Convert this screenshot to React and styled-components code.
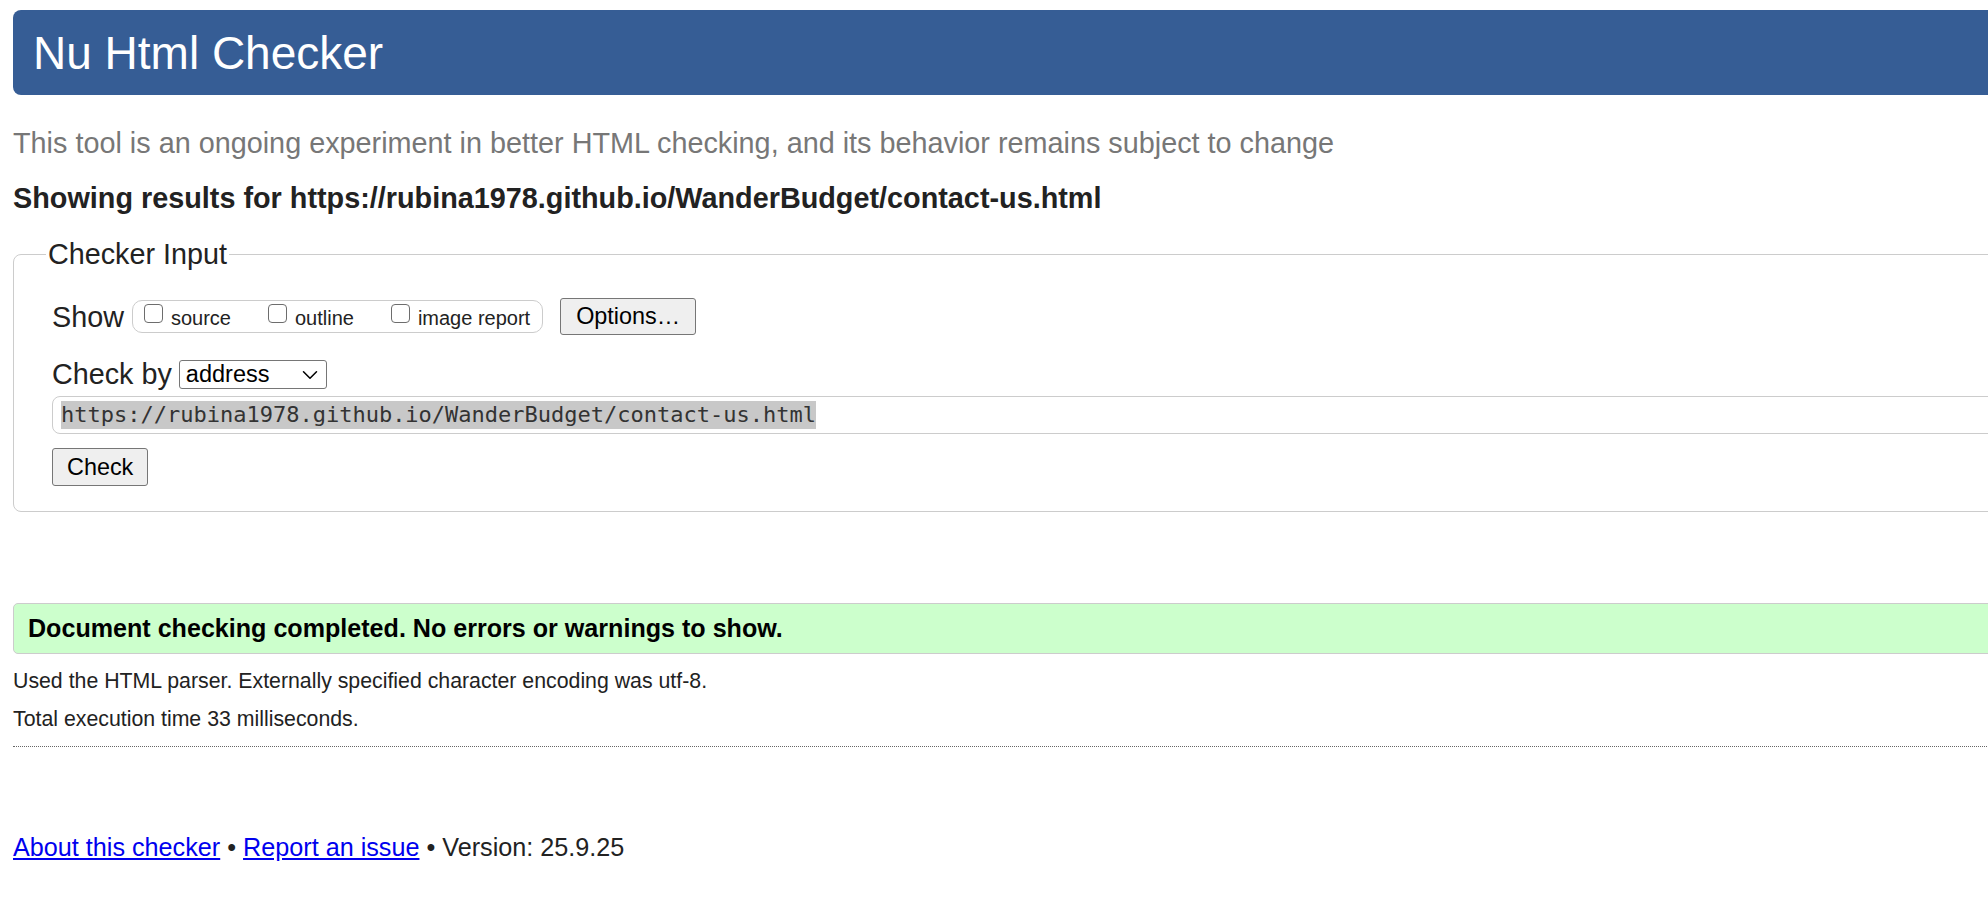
import React from 'react';
import styled, { createGlobalStyle } from 'styled-components';
import { ChevronDown } from 'lucide-react';

const GlobalStyle = createGlobalStyle`
html, body {
    margin: 0;
    padding: 0;
    background: #fff;
}
body {
    overflow-x: hidden;
    font-family: "Liberation Sans", Arial, sans-serif;
    color: #222;
}
`

const Page = styled.div`
width: 2200px;
padding: 10px 0 0 13px;
`

const Banner = styled.h1`
margin: 0;
height: 85px;
display: flex;
align-items: center;
padding-left: 20px;
background-color: #365d95;
border-radius: 8px;
color: #fff;
font-size: 46px;
font-weight: normal;
`

const Intro = styled.p`
margin: 30px 0 0;
font-size: 28.8px;
line-height: 36px;
color: #777;
`

const ResultsFor = styled.h2`
margin: 19px 0 0;
font-size: 28.8px;
line-height: 36px;
font-weight: bold;
color: #222;
`

const InputFieldset = styled.fieldset`
margin: 20px 0 0;
padding: 0 0 25px 38px;
border: 1px solid #ccc;
border-radius: 8px;
min-width: 0;
`

const Legend = styled.legend`
margin-left: -6px;
padding: 0 2px;
font-size: 28.75px;
line-height: 36px;
color: #222;
`

const FieldRow = styled.div`
display: flex;
align-items: center;
height: ${props => props.$height}px;
margin-top: ${props => props.$top}px;
`

const RowLabel = styled.span`
font-size: 28.75px;
line-height: 36px;
margin-right: ${props => props.$gap}px;
color: #222;
`

const OptionGroup = styled.div`
display: flex;
align-items: center;
gap: 37px;
height: 33px;
box-sizing: border-box;
padding: 0 12px 0 11px;
border: 1px solid #ccc;
border-radius: 10px;
`

const OptionItem = styled.label`
display: flex;
align-items: center;
padding-top: 3px;
font-size: 20px;
color: #222;
`

const Checkbox = styled.input.attrs({ type: 'checkbox' })`
appearance: none;
width: 19px;
height: 19px;
margin: -10px 8px 0 0;
box-sizing: border-box;
border: 1px solid #6d6d6d;
border-radius: 4px;
background: #fff;
`

const PlainButton = styled.button`
height: ${props => props.$height}px;
margin-left: ${props => props.$left || 0}px;
padding: 0 ${props => props.$pad}px;
font-family: "Liberation Sans", Arial, sans-serif;
font-size: 23.4px;
color: #000;
background: #efefef;
border: 1px solid #767676;
border-radius: 3px;
`

const SelectWrap = styled.div`
position: relative;
width: 148px;
height: 29px;
`

const Select = styled.select`
appearance: none;
width: 100%;
height: 100%;
padding: 0 0 0 6px;
box-sizing: border-box;
font-family: "Liberation Sans", Arial, sans-serif;
font-size: 23.5px;
color: #000;
background: #fff;
border: 1px solid #767676;
border-radius: 3px;
`

const ChevronIcon = styled(ChevronDown)`
position: absolute;
right: 4px;
top: 2px;
pointer-events: none;
color: #000;
`

const AddressBox = styled.div`
margin-top: 4px;
height: 38px;
box-sizing: border-box;
display: flex;
align-items: center;
padding-left: 8px;
border: 1px solid #ccc;
border-radius: 8px;
`

const SelectedText = styled.span`
font-family: "DejaVu Sans Mono", "Liberation Mono", monospace;
font-size: 22px;
line-height: 28px;
color: #333;
background: #c8c8c8;
`

const ButtonRow = styled.div`
margin-top: 14px;
`

const StatusBox = styled.div`
margin-top: 91px;
height: 51px;
box-sizing: border-box;
display: flex;
align-items: center;
padding-left: 14px;
background: #ccffcc;
border: 1px solid #ccc;
border-radius: 5px;
font-size: 25.1px;
font-weight: bold;
color: #000;
`

const Note = styled.p`
margin: ${props => props.$top}px 0 0;
font-size: 21.3px;
line-height: 26px;
color: #222;
`

const Rule = styled.hr`
margin: 14px 0 0;
border: 0;
border-top: 1px dotted #666;
height: 0;
`

const Footer = styled.p`
margin: 85px 0 0;
font-size: 25.2px;
line-height: 30px;
color: #222;
`

const FooterLink = styled.a`
color: #0000ee;
text-decoration: underline;
`

const options = ['source', 'outline', 'image report'];

export default function App() {
    const url = 'https://rubina1978.github.io/WanderBudget/contact-us.html';
    return (
        <>
            <GlobalStyle />
            <Page>
                <Banner>Nu Html Checker</Banner>
                <Intro>This tool is an ongoing experiment in better HTML checking, and its behavior remains subject to change</Intro>
                <ResultsFor>Showing results for {url}</ResultsFor>

                <InputFieldset>
                    <Legend>Checker Input</Legend>
                    <FieldRow $top={26} $height={37}>
                        <RowLabel $gap={8}>Show</RowLabel>
                        <OptionGroup>
                            {options.map(name => (
                                <OptionItem key={name}>
                                    <Checkbox />
                                    {name}
                                </OptionItem>
                            ))}
                        </OptionGroup>
                        <PlainButton $height={37} $pad={15} $left={17}>Options…</PlainButton>
                    </FieldRow>
                    <FieldRow $top={21} $height={36}>
                        <RowLabel $gap={7}>Check by</RowLabel>
                        <SelectWrap>
                            <Select defaultValue="address">
                                <option value="address">address</option>
                                <option value="file">file upload</option>
                                <option value="text">text input</option>
                            </Select>
                            <ChevronIcon size={26} strokeWidth={1.4} />
                        </SelectWrap>
                    </FieldRow>
                    <AddressBox>
                        <SelectedText>{url}</SelectedText>
                    </AddressBox>
                    <ButtonRow>
                        <PlainButton $height={38} $pad={14}>Check</PlainButton>
                    </ButtonRow>
                </InputFieldset>

                <StatusBox>Document checking completed. No errors or warnings to show.</StatusBox>
                <Note $top={14}>Used the HTML parser. Externally specified character encoding was utf-8.</Note>
                <Note $top={12}>Total execution time 33 milliseconds.</Note>
                <Rule />

                <Footer>
                    <FooterLink href="#about">About this checker</FooterLink>
                    {' • '}
                    <FooterLink href="#issue">Report an issue</FooterLink>
                    {' • Version: 25.9.25'}
                </Footer>
            </Page>
        </>
    );
}
